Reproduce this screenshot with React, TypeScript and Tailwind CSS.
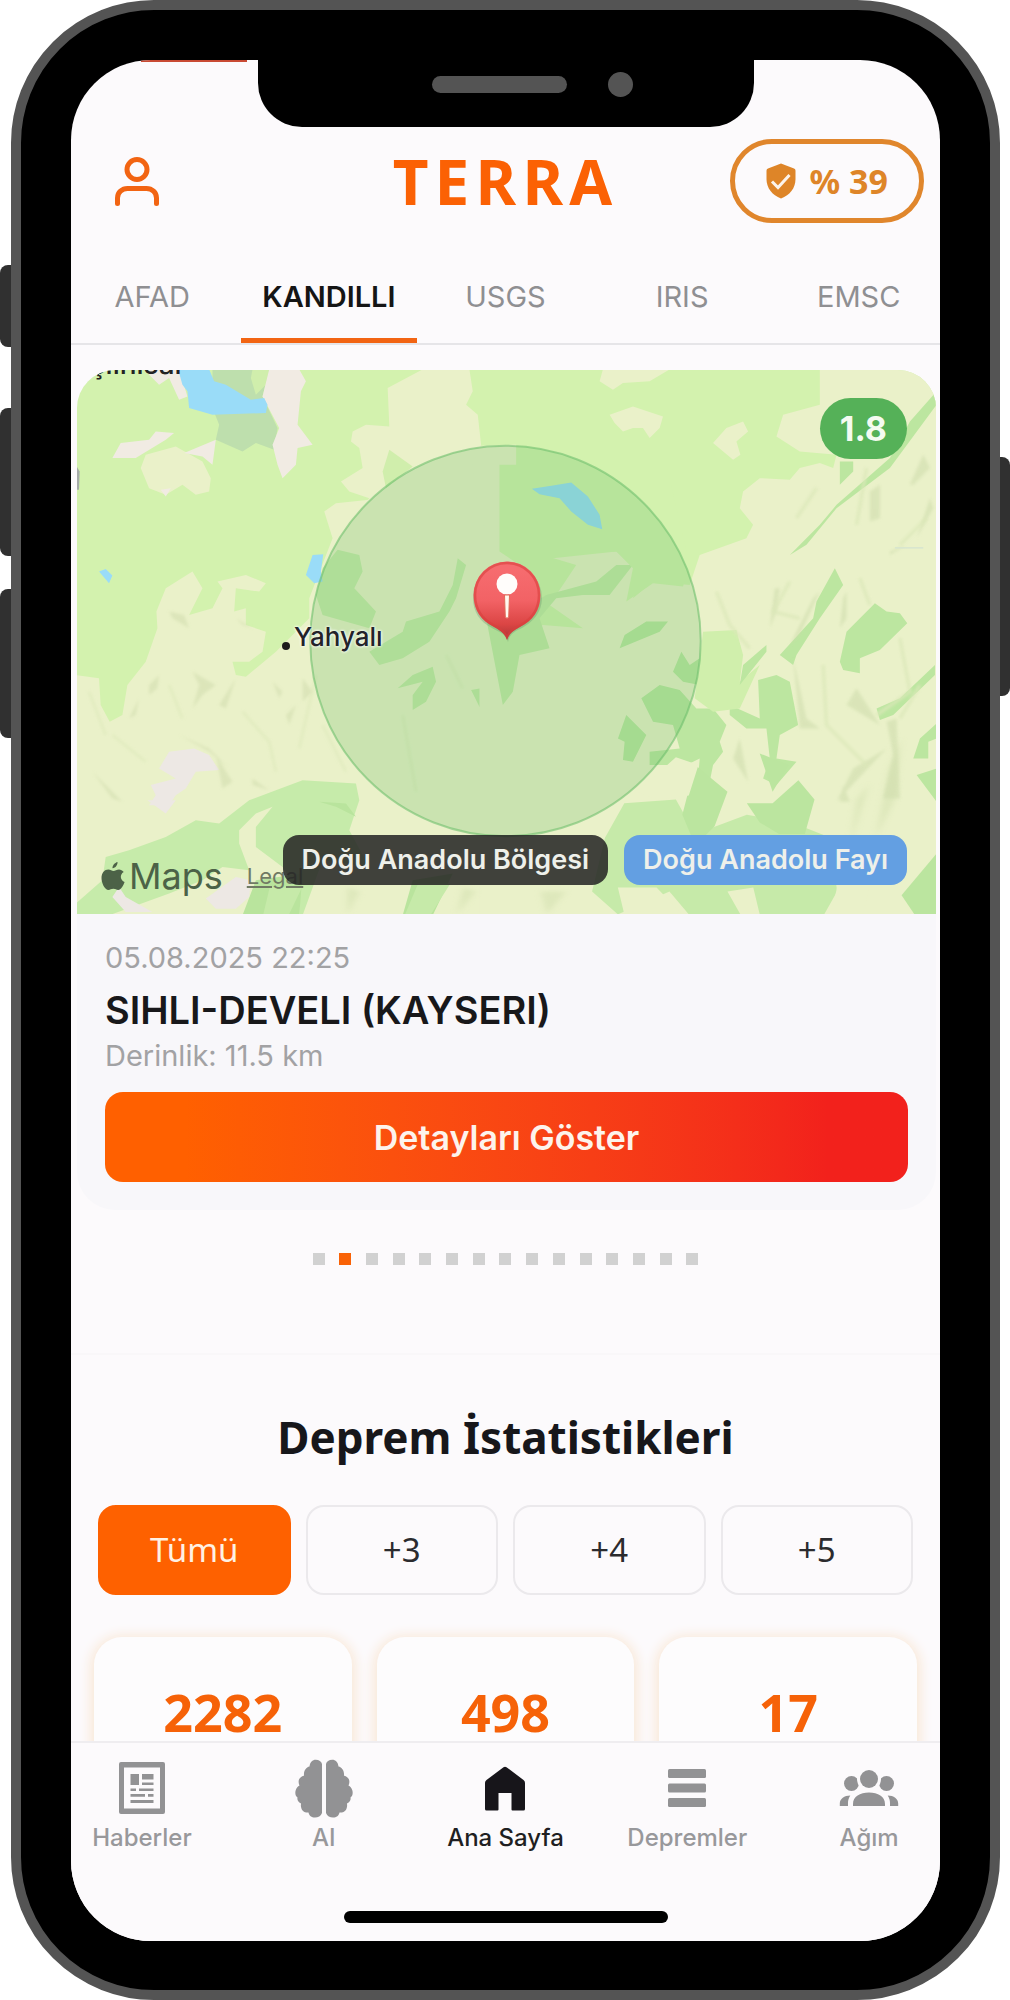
import { useState } from "react";

const INTER = "font-['Inter','Liberation_Sans',sans-serif]";
const NOTO = "font-['Noto_Sans','Open_Sans',sans-serif]";

function UserIcon() {
  return (
    <svg viewBox="0 0 44 49" className="h-[49px] w-11" fill="none" stroke="#f26412" strokeWidth="5" strokeLinecap="round" aria-hidden="true">
      <circle cx="22" cy="12.500" r="10" />
      <path d="M2.500 46.500V41c0-5.500 4.500-9.500 10-9.500h19c5.500 0 10 4 10 9.500v5.500" />
    </svg>
  );
}

function ShieldIcon() {
  return (
    <svg viewBox="0 0 30 36" className="h-9 w-[30px]" aria-hidden="true">
      <path d="M15 0.500 28 5.500q1.500.6 1.500 2.200V16c0 9-5.500 16-14.500 19.500C6 32 .5 25 .5 16V7.700Q.5 6.100 2 5.500z" fill="#de8528" />
      <path d="m6 18.500 6 6L23.500 12" fill="none" stroke="#fcf4ec" strokeWidth="3" />
    </svg>
  );
}

function NewsIcon() {
  return (
    <svg viewBox="0 0 48 54" className="h-[54px] w-12" fill="#929294" aria-hidden="true">
      <path fillRule="evenodd" d="M3 1h42a2 2 0 0 1 2 2v48a2 2 0 0 1-2 2H3a2 2 0 0 1-2-2V3a2 2 0 0 1 2-2zm3 5.500v41h36v-41z" />
      <path d="M12.500 13H21v11h-8.500zM24 13h11.500v5.500H24zM24 21.500h11.500V24H24zM12.500 27.500H18V30h-5.500zM21 27.500h14.500V30H21zM12.500 33H27v2.800H12.500zM30 33h5.500v2.800H30zM12.500 39h23v3h-23z" />
    </svg>
  );
}

function BrainIcon() {
  const half = "M27 5v49c-1 3-4 4.500-7 4.500-3.500 0-6-2-6.500-5-4 .5-7-2-7.500-5.800-.3-1.200 0-2.200 0-3.200-3-1.200-4-3.800-3.500-6C0 37 0 33 .8 31c.7-2.500 2-3.500 3.700-4.500-1.500-3-1.200-7 2-8.800 1-.6 2-.9 2.500-.9-.5-5 2-8.600 5.500-9.300C15 3 17.500.7 20.700.7 24 .7 26.500 2.500 27 5z";
  return (
    <svg viewBox="0 0 58 59" className="h-[59px] w-[58px]" fill="#929294" aria-hidden="true">
      <path d={half} />
      <path d={half} transform="translate(58 0) scale(-1 1)" />
    </svg>
  );
}

function HomeIcon() {
  return (
    <svg viewBox="0 0 42 45" className="h-[45px] w-[42px]" fill="#17151a" aria-hidden="true">
      <path d="M19.500 1.200q1.500-1.100 3 0L39.500 14q1.500 1.200 1.500 3v26q0 1.500-1.500 1.500H28.500q-1 0-1-1V27h-13v16.500q0 1-1 1h-11Q1 44.500 1 43V17q0-1.800 1.500-3z" />
    </svg>
  );
}

function ListIcon() {
  return (
    <svg viewBox="0 0 38 38" className="h-[38px] w-[38px]" fill="#929294" aria-hidden="true">
      <rect y="0" width="38" height="9" rx="1.500" />
      <rect y="14.500" width="38" height="9" rx="1.500" />
      <rect y="29" width="38" height="9" rx="1.500" />
    </svg>
  );
}

function PeopleIcon() {
  return (
    <svg viewBox="0 0 60 36" className="h-9 w-[60px]" fill="#929294" aria-hidden="true">
      <circle cx="12.500" cy="13.500" r="7.500" />
      <circle cx="47.500" cy="13.500" r="7.500" />
      <circle cx="30" cy="9" r="12" fill="#fcfafc" />
      <circle cx="30" cy="9" r="9" />
      <path d="M.8 36v-2.500c0-4.500 4.500-8 10.500-8C9.500 28 9 31 9 33v3zM59.200 36v-2.500c0-4.500-4.500-8-10.500-8 1.800 2.500 2.300 5.500 2.300 7.500v3zM14 36v-2c0-7.500 7-11.500 16-11.500S46 26.500 46 34v2z" />
    </svg>
  );
}

function AppleIcon() {
  return (
    <svg viewBox="0 0 24 29" className="h-[29px] w-6" fill="#4c6247" aria-hidden="true">
      <path d="M16.500 0c.3 2.700-1.800 6-5 6.300C11.300 3.500 13.800.7 16.500 0zM22.700 10c-4.300 2.600-3.500 8.300.9 10-1.200 3.300-3.500 8-6.400 8-1.900 0-2.500-1.200-4.800-1.200S9.200 28 7.500 28C3.800 28 .5 21 .5 16c0-5.200 3.200-8.500 6.800-8.500 2.200 0 3.600 1.400 5.200 1.400S15.800 7.400 18 7.400c1.700 0 3.600 1 4.700 2.600z" />
    </svg>
  );
}

function PinIcon() {
  return (
    <svg viewBox="0 0 76 86" className="h-[86px] w-[76px]" aria-hidden="true">
      <defs>
        <linearGradient id="pin" x1="0" y1="0" x2="0" y2="1">
          <stop offset=".1" stopColor="#f66c6f" />
          <stop offset=".5" stopColor="#f26265" />
          <stop offset=".8" stopColor="#db4544" />
          <stop offset="1" stopColor="#a83434" />
        </linearGradient>
      </defs>
      <path d="M39 84c-2-8-9-10-16-14C11 64 4 54 4 40a34 34 0 0 1 69 0c0 14-9 24-20 30-7 3-12.500 6-14 14z" fill="#5f8b66" opacity=".3" />
      <path d="M38 82c-1.500-5-4-8-13-13C13 63 4.500 53 4.500 37a33.500 33.500 0 0 1 67 0c0 16-8.500 26-20.500 32-9 5-11.500 8-13 13z" fill="url(#pin)" />
      <path d="M6 37a32 32 0 0 1 64 0c0 15-8 25-20 31-7 3.500-10 7-12 11-2-4-5-7.500-12-11C14 62 6 52 6 37z" fill="none" stroke="#d8403c" strokeWidth="2.500" opacity=".6" />
      <circle cx="38" cy="26" r="10.500" fill="#fffdfb" />
      <path d="M35.500 37h5l-.8 22q-1.700 2.500-3.400 0z" fill="#fffaf0" stroke="#df6b58" strokeWidth="1" />
    </svg>
  );
}

function Terrain() {
  return (
    <svg viewBox="0 0 858 544" preserveAspectRatio="xMidYMid slice" className="absolute inset-0 h-full w-full" aria-hidden="true">
      <defs>
        <filter id="soft"><feGaussianBlur stdDeviation="5" /></filter>
      </defs>
      <rect width="858" height="544" fill="#d3f2ae" />

      {/* western hills and plains */}
      <g transform="translate(-8 -5) scale(.3333)">
        <path fill="#eaf1c9" d="M20 930 90 940 95 1020 122 1070 160 1050 175 960 230 890 265 790 262 740 290 670 370 620 400 670 360 750 430 730 460 670 445 650 530 630 590 655 570 680 500 670 495 740 530 730 530 780 590 800 580 860 540 890 490 890 500 930 530 935 620 860 720 760 720 700 790 520 765 440 800 415 900 405 930 380 1000 380 1000 250 1340 240 1340 1750 20 1700z" />
        <path fill="#eaf1c9" d="M955 70 1060 14 1200 14 1210 80 1190 120 1225 150 1235 240 1210 300 1230 470 1300 530 1310 620 1340 900 900 900 860 690 870 580 800 540 810 500 900 400 840 380 815 350 880 310 870 250 845 230 850 200 890 180 960 185z" />
        <path fill="#d0eeac" d="M960 255 1030 305 950 370 940 320z" />
        <path fill="#eaf1c9" d="M230 270 320 245 400 290 425 340 420 380 380 390 340 360 290 390 240 370 215 310z" />
        <path fill="#c9eaaa" d="M805 555 870 570 880 620 855 670 920 740 900 790 760 750 740 690 760 610zM1165 580 1190 600 1160 700 1140 740 1080 830 1000 880 930 900 900 860 1000 800 1010 770 1110 740 1150 660z" />
        <path fill="#c6e9a8" d="M985 970 1030 930 1090 905 1100 950 1070 1010 1030 1035 1030 990 1060 950zM1205 975 1290 960 1260 1030 1230 1025zM1310 760 1350 800 1340 970 1280 960z" />
        <path fill="#bedfad" d="M430 14 600 14 580 95 625 190 615 255 560 235 520 260 440 225 450 180 430 130z" />
        <path fill="#d0eeac" d="M550 14H600L590 60 560 90 545 40z" />
        <path fill="#f1ebe3" d="M600 14H690L710 50 695 80 685 180 730 240 685 250 680 300 640 340 625 300 610 240 630 190 580 95zM240 30 270 60 300 40 330 105 355 95 330 14 235 14zM130 280 155 235 240 225 260 200 315 205 290 225 200 280zM345 265 440 225 430 300 400 275zM275 375 305 370 290 395z" />
        <path fill="#9adcf8" d="M327 14H420L435 50 470 60 545 105 585 100 595 120 590 145 430 150 360 130 355 80 340 60zM90 620 110 612 130 632 120 655zM730 570 762 568 755 620 760 650 735 655 710 630z" />
        <path fill="#ede8e4" d="M270 1210 300 1160 375 1150 420 1170 450 1215 380 1220 350 1270 320 1290 300 1320H240L260 1290 245 1260 320 1240z" />
        <path fill="#a6aca9" d="M20 300 32 320 30 375 20 375z" />
        <g fill="#d3deb0" opacity=".6" filter="url(#soft)">
          <path d="M240 960 270 930 265 970 240 990zM370 920 440 960 400 990 370 1030 390 960zM450 1020 500 940 470 1030zM300 740 345 750 360 790 310 760zM500 760 550 790 520 780zM610 950 640 980 630 1000zM700 940 730 980 700 1010zM440 1170 490 1250 460 1270zM550 1240 600 1275 550 1260zM650 1050 680 1020 660 1080z" />
          <path d="M330 1110 420 1150 480 1210 420 1160zM70 1220 160 1310 130 1300zM180 1060 210 1000 200 1050z" />
        </g>
        <g fill="none" stroke="#dce8b9" strokeWidth="8" opacity=".6" filter="url(#soft)">
          <path d="M60 980 110 1110M130 1110 230 1190M520 1040 600 1130 620 1220M300 960 340 1060M760 1080 830 1220M740 930 690 1150M1130 870 1180 970M1000 1050 1040 1280" />
        </g>
      </g>

      {/* south-western valleys */}
      <g transform="translate(-8 430) scale(.3333)">
        <path fill="#c6ebaa" d="M20 310 100 240 110 170 180 150 290 110 380 60 450 70 540 0 620 -30 700 -60 860 -50 870 0 840 90 900 200 760 180 700 345H20z" />
        <path fill="#eaf1c9" d="M120 345 300 280 400 240 460 200 540 210 510 130 510 90 560 40 610 20 560 80 560 140 640 200 690 280 690 345zM270 300 340 300 340 340 270 340z" />
        <path fill="#b9e49d" d="M750 5 830 10 860 50 800 20zM520 345 560 240 700 220 690 345zM1000 345 1030 240 1150 220 1090 345z" />
        <path fill="#ede8e4" d="M410 295 500 230 545 240 540 290 500 325 440 325zM130 290 150 260 170 290 250 335 170 335zM235 0H320L290 40z" />
      </g>

      {/* eastern mountains */}
      <g transform="translate(422 -5) scale(.3333)">
        <path fill="#eaf1c9" d="M310 14H510L450 50 370 55 340 75 300 50zM330 150 400 125 490 155 480 190 450 220 430 190 400 190 370 200 345 175zM640 235 680 190 730 170 745 200 710 230 722 270 700 285zM960 14H1310V1700H-60V870L130 780 250 790 150 720 230 600 130 570 350 560 430 600 400 700 460 650 570 660 600 570 740 520 760 480 720 430 730 380 780 340 870 345 900 310 960 295 1000 310 1010 270 900 260 830 215 850 150 960 120z" />
        <path fill="#c6e9a8" d="M-40 760 60 740 140 690 290 650 350 600 400 600 330 690 250 690 170 700 120 760 150 850 60 870 40 980 10 1020z" />
        <path fill="#d3f2ae" d="M0 300 500 300 570 600 550 665 460 655 380 710 400 610 350 560 160 580 100 640 60 600 0 560z" />
        <path fill="#bce6a0" d="M360 850 375 810 440 770 505 770 480 800zM520 920 545 860 570 900 600 880 600 960 550 950zM425 1000 480 960 540 975 590 1030 640 1030 680 1080 660 1130 670 1160 640 1200 620 1300H590L600 1180 560 1200 450 1200 450 1160 540 1150 520 1080 460 1070zM380 1050 440 1110 400 1190 370 1185 375 1130 355 1120zM775 945 830 930 870 950 895 1080 840 1110 830 1180 890 1190 830 1260 790 1240 810 1180 800 1090 740 1090 690 1050 690 1020 780 1060z" />
        <path fill="#d0efac" d="M610 800 710 795 730 870 720 950 780 900 720 1030 640 1040 585 1000z" />
        <path fill="#bce6a0" d="M730 900 800 840 800 860 720 960zM840 870 940 760 950 710 1005 610 1030 660 960 760 890 870 880 900zM1020 890 1040 800 1125 715 1160 740 1200 745 1222 775 1140 855 1080 880 1080 925 1030 915zM870 570 960 480 1010 420 1170 280 1230 170 1310 80 1310 120 1170 310 1010 430 920 540zM1020 290 1060 290 1060 320 1020 360zM1130 1030 1200 1000 1305 900 1305 930 1180 1050 1140 1065zM1310 1075 1260 1120 1240 1180 1285 1180 1285 1130 1310 1120zM1250 1230 1310 1210 1310 1310z" />
        <g fill="#cddbab" opacity=".55" filter="url(#soft)">
          <path d="M1110 380 1140 360 1140 460 1110 470zM1230 360 1270 270 1290 310 1240 360zM1250 520 1290 400 1300 430zM940 700 960 680 900 810 870 840zM1030 700 1040 680 1040 760 1020 790zM810 790 830 740 840 670 825 670zM880 880 920 1060 960 1090 900 1090 890 980zM1160 1070 1190 1060 1200 1300 1150 1300 1180 1170zM1060 1210 1160 1150 1010 1310zM1030 1260 1050 1310 1020 1310zM720 1120 745 1250 700 1180zM1070 970 1140 1080 1040 1020zM1170 560 1220 540 1170 570zM460 1270 480 1230 500 1290z" />
        </g>
        <g fill="none" stroke="#dce8b9" strokeWidth="10" opacity=".8" filter="url(#soft)">
          <path d="M650 680 690 780 750 850M870 650 820 740 900 760M970 900 980 1080 1100 1200M1080 640 1110 720M1200 820 1230 980 1130 1050M1200 1060 1260 960M1280 460 1200 540M1100 310 1070 480M950 370 890 460" />
        </g>
        <path stroke="#d5e4d0" strokeWidth="4" d="M1185 549H1270" />
        <path fill="#9adcf8" d="M97 372 160 362 215 353 265 395 300 450 308 493 265 480 215 440 180 400 120 388z" />
      </g>

      {/* south-eastern forests */}
      <g transform="translate(-78 -30) scale(.644 .3827)">
        <path fill="#c6eaa9" d="M940 1300 970 1210 1050 1200 1080 1290 1160 1240 1230 1260 1290 1300 1300 1440 1280 1500H1070L1040 1440 960 1500 920 1440zM630 1500 650 1420H700L670 1500zM420 1430 470 1430 450 1500H410z" />
        <path fill="#bbe59f" d="M1080 1110 1130 1180 1110 1270 1080 1320 1060 1240zM1160 1210 1200 1210 1240 1150 1265 1200 1250 1290 1210 1290 1180 1260zM1180 1080 1225 1110 1200 1180z" />
        <path fill="#eaf1c9" d="M990 1180 1050 1090 1085 1110 1070 1190 1020 1200zM960 1430 1020 1430 1060 1500H970zM1130 1440 1170 1430 1180 1500H1150zM1300 1430 1350 1430 1340 1500H1290z" />
        <path fill="#bbe59f" d="M1400 1450 1455 1340V1500H1420z" />
        <g fill="#d1dfae" opacity=".5" filter="url(#soft)">
          <path d="M1380 1120 1400 1040 1390 1200 1360 1300zM1330 1200 1350 1160 1320 1320zM540 1430 560 1440 540 1500zM720 1430 740 1440 710 1500zM840 1440 880 1440 850 1500z" />
        </g>
      </g>

      <circle cx="428" cy="271" r="195" fill="#4caf50" fillOpacity=".2" stroke="#6fc06e" strokeOpacity=".6" strokeWidth="2" />
    </svg>
  );
}

function QuakeMap() {
  return (
    <div className="relative h-[544px] overflow-hidden rounded-t-[38px]">
      <Terrain />
      <span className="absolute -top-6 -left-5 text-[28px] leading-9 font-medium text-[#232323]">Yeşilhisar</span>
      <span className="absolute top-[272px] left-[205px] h-2 w-2 rounded-full bg-[#1c1c1c]" />
      <span className="absolute top-[249px] left-[217px] text-[26px] leading-9 font-medium text-[#232329] [text-shadow:0_0_3px_#fff,0_0_3px_#fff]">Yahyalı</span>
      <span className="absolute top-[188px] left-1/2 -translate-x-1/2">
        <PinIcon />
      </span>
      <span className="absolute top-7 right-[29px] rounded-full bg-[#55b158] px-5 py-2 text-[34px] leading-[45px] font-bold text-[#f4fbf1]">1.8</span>
      <div className="absolute bottom-[18px] left-6 flex items-center">
        <AppleIcon />
        <span className="ml-1 text-[36px] leading-10 text-[#4c6247]">Maps</span>
        <a href="#legal" className="ml-6 text-[22px] leading-7 text-[#707a64] underline">Legal</a>
      </div>
      <div className="absolute right-[29px] bottom-[29px] flex gap-4 text-[27px] leading-[50px] font-semibold whitespace-nowrap text-[#eef0ea]">
        <span className="rounded-2xl bg-[#222]/85 px-[19px]">Doğu Anadolu Bölgesi</span>
        <span className="rounded-2xl bg-[#639fe2] px-[19px]">Doğu Anadolu Fayı</span>
      </div>
    </div>
  );
}

const AGENCIES = ["AFAD", "KANDILLI", "USGS", "IRIS", "EMSC"];
const FILTERS = ["Tümü", "+3", "+4", "+5"];
const COUNTS = ["2282", "498", "17"];
const PAGES = Array.from({ length: 15 }, (_, i) => i);
const NAV = [
  { label: "Haberler", icon: <NewsIcon /> },
  { label: "AI", icon: <BrainIcon /> },
  { label: "Ana Sayfa", icon: <HomeIcon /> },
  { label: "Depremler", icon: <ListIcon /> },
  { label: "Ağım", icon: <PeopleIcon /> },
];

export default function App() {
  const [agency, setAgency] = useState("KANDILLI");
  const [filter, setFilter] = useState("Tümü");
  const [page, setPage] = useState(1);

  return (
    <div className={`relative overflow-hidden bg-white pr-[10px] pl-[11px] ${INTER}`}>
      <span className="absolute top-[265px] left-0 h-[82px] w-5 rounded-l-lg bg-[#303030]" />
      <span className="absolute top-[408px] left-0 h-[148px] w-5 rounded-l-lg bg-[#303030]" />
      <span className="absolute top-[589px] left-0 h-[149px] w-5 rounded-l-lg bg-[#303030]" />
      <span className="absolute top-[457px] right-0 h-[239px] w-5 rounded-r-lg bg-[#303030]" />

      <div className="relative rounded-[143px] border-10 border-[#545454] bg-black px-[50px] pt-[50px] pb-[49px]">
        <div className="relative overflow-hidden rounded-[80px] bg-[#fcfafc]">
          <span className="absolute top-0 left-[70px] h-0.5 w-[106px] bg-[#c94a34]" />
          <div className="absolute top-0 left-1/2 h-[67px] w-[496px] -translate-x-1/2 rounded-b-[44px] bg-black">
            <span className="absolute top-4 left-[174px] h-[17px] w-[135px] rounded-full bg-[#545454]" />
            <span className="absolute top-3 left-[350px] h-[25px] w-[25px] rounded-full bg-[#545454]" />
          </div>

          <header className="grid grid-cols-[1fr_auto_1fr] items-center px-4 pt-[79px]">
            <button type="button" aria-label="Profil" className="ml-7 justify-self-start">
              <UserIcon />
            </button>
            <h1 className={`text-[62px] leading-[84px] font-bold tracking-widest text-[#fb6104] ${NOTO}`}>TERRA</h1>
            <button type="button" className={`flex h-[84px] items-center gap-[14px] justify-self-end rounded-full border-[5px] border-[#e0862c] px-[31px] text-[34px] font-bold text-[#de8528] ${NOTO}`}>
              <ShieldIcon />
              % 39
            </button>
          </header>

          <div className="border-b-2 border-[#e6e5e8]">
            <div role="tablist" className="-mx-[7px] grid grid-cols-5">
              {AGENCIES.map((name) => (
                <button
                  key={name}
                  type="button"
                  role="tab"
                  aria-selected={agency === name}
                  onClick={() => setAgency(name)}
                  className={`h-[120px] border-b-[5px] pt-8 text-[29px] leading-9 ${agency === name ? "border-[#f26412] font-semibold text-[#151515]" : "border-transparent text-[#8f8f92]"}`}
                >
                  {name}
                </button>
              ))}
            </div>
          </div>

          <article className="mt-[25px] mr-1 ml-[6px] rounded-[38px] bg-[#f8f7fa]">
            <QuakeMap />
            <div className="px-7 pt-[26px] pb-7">
              <p className="text-[29px] leading-9 text-[#a2a2a4]">05.08.2025 22:25</p>
              <h2 className="mt-3 text-[38px] leading-[44px] font-semibold text-[#18181a]">SIHLI-DEVELI (KAYSERI)</h2>
              <p className="mt-1.5 text-[29px] leading-9 text-[#a2a2a4]">Derinlik: 11.5 km</p>
              <button type="button" className="mt-[18px] h-[90px] w-full rounded-[18px] bg-linear-to-r from-[#ff6000] from-10% to-[#f2211c] to-90% text-[34px] font-semibold text-[#fdf3ec]">
                Detayları Göster
              </button>
            </div>
          </article>

          <div className="mx-auto mt-[43px] flex w-[386px] justify-between">
            {PAGES.map((i) => (
              <button
                key={i}
                type="button"
                aria-label={`Deprem ${i + 1}`}
                onClick={() => setPage(i)}
                className={`h-3 w-3 ${page === i ? "bg-[#f96206]" : "bg-[#d1d1d1]"}`}
              />
            ))}
          </div>

          <section className="mt-[88px] border-t-2 border-[#f9f7f9]">
            <h2 className={`pt-[52px] text-center text-[44px] leading-[60px] font-bold text-[#17171b] ${NOTO}`}>Deprem İstatistikleri</h2>
            <div className="mt-[38px] grid grid-cols-4 gap-[15px] px-[27px]">
              {FILTERS.map((name) => (
                <button
                  key={name}
                  type="button"
                  aria-pressed={filter === name}
                  onClick={() => setFilter(name)}
                  className={`h-[90px] rounded-[18px] border-2 text-[33px] ${NOTO} ${filter === name ? "border-[#fe6100] bg-[#fe6100] text-[#fff1e4]" : "border-[#ebe9ec] text-[#2b2b2e]"}`}
                >
                  {name}
                </button>
              ))}
            </div>
            <div className="grid h-[146px] grid-cols-3 gap-[25px] overflow-hidden px-[23px] pt-[42px]">
              {COUNTS.map((count) => (
                <div key={count} className={`h-[200px] rounded-[28px] bg-[#fdfcfd] pt-12 text-center text-[52px] leading-[54px] font-bold text-[#f66208] shadow-[0_2px_12px_4px_#f9e9d9] ${NOTO}`}>
                  {count}
                </div>
              ))}
            </div>
          </section>

          <div className="relative h-[200px] border-t-2 border-[#efedf0] bg-[#fcfafc]">
            <nav className="-mx-5 grid grid-cols-5">
              {NAV.map(({ label, icon }) => (
                <a
                  key={label}
                  href="#nav"
                  className={`flex flex-col items-center text-[24px] leading-8 font-medium ${label === "Ana Sayfa" ? "text-[#1f1f22]" : "text-[#98989b]"}`}
                >
                  <span className="flex h-[92px] items-center pb-0.5">{icon}</span>
                  <span className="-mt-[13px]">{label}</span>
                </a>
              ))}
            </nav>
            <span className="absolute bottom-[18px] left-1/2 h-3 w-[324px] -translate-x-1/2 rounded-full bg-black" />
          </div>
        </div>
      </div>
    </div>
  );
}
